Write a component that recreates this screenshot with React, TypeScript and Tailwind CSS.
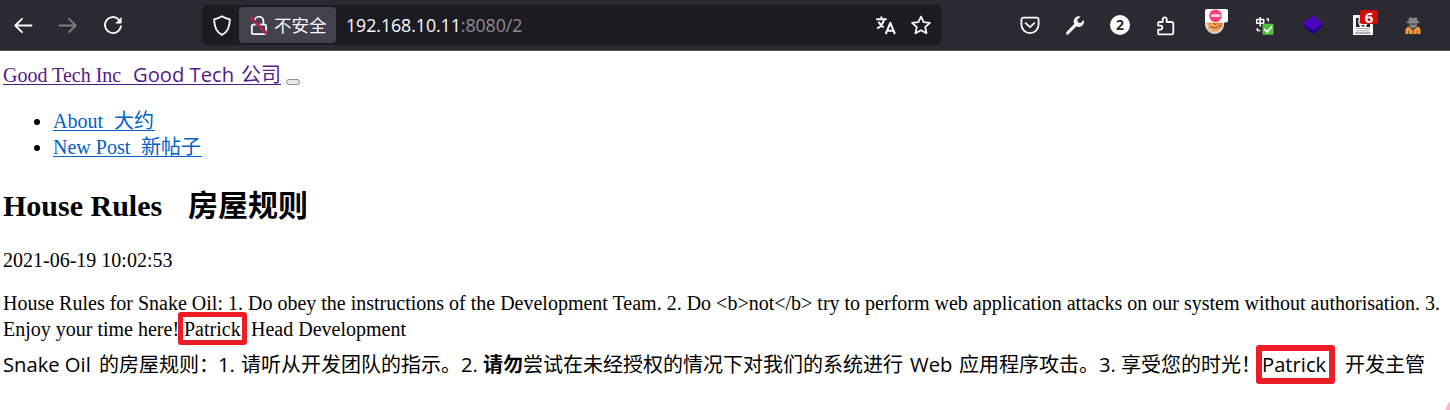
import React from 'react';

type IconProps = { children: React.ReactNode; className?: string };

/* 30px square icon; drawings use the same pixel grid, centred on 15,15 */
function Icon({ children, className = '' }: IconProps) {
  return (
    <svg
      viewBox="0 0 30 30"
      className={`h-[30px] w-[30px] shrink-0 ${className}`}
      fill="none"
      stroke="#fbfbfe"
      strokeWidth="1.8"
      strokeLinecap="round"
      strokeLinejoin="round"
    >
      {children}
    </svg>
  );
}

function Toolbar() {
  return (
    <header className="flex h-[51px] items-center border-b border-[#53525c] bg-[#2b2a33] pl-2">
      <nav className="flex w-[194px] gap-[15px]">
        <Icon>
          <path d="M23.5 15.5H7.2M14 8.8 7.2 15.5l6.8 6.7" />
        </Icon>
        <Icon className="opacity-40">
          <path d="M6.5 15.5h16.3M16 8.8l6.8 6.7-6.8 6.7" />
        </Icon>
        <Icon>
          <path d="M22.9 16.2A8 8 0 1 1 20.6 9.3" />
          <path d="M23.6 7.1v5.6a.7.7 0 0 1-.7.7h-5.6z" fill="#fbfbfe" stroke="none" />
        </Icon>
      </nav>

      <div className="flex h-[40px] w-[739px] items-center rounded-[5px] bg-[#1c1b22]">
        <Icon className="ml-[5px]">
          <path d="M15 6.3c2.5 1.7 5.2 2.6 7.9 3-.1 7.6-2.4 13-7.9 15.6-5.5-2.6-7.8-8-7.9-15.6 2.7-.4 5.4-1.3 7.9-3z" />
        </Icon>
        <div className="ml-[2px] flex h-[36px] w-[97px] items-center rounded-[4px] bg-[#42414d]">
          <Icon className="ml-[5px]">
            <path d="M9.8 14.6h11a1.3 1.3 0 0 1 1.3 1.3v6.5a1.8 1.8 0 0 1-1.8 1.8H9.6a1.8 1.8 0 0 1-1.8-1.8v-6a1.8 1.8 0 0 1 1.8-1.8zM10.8 14.3V11a4.3 4.3 0 0 1 8.6 0v3.3" />
            <path d="M7 7.8 23.3 24.2" stroke="#42414d" strokeWidth="3.2" />
            <path d="M7 7.8 23.3 24.2" stroke="#e8114f" strokeWidth="1.7" />
          </Icon>
          <span className="font-['Noto_Sans_CJK_SC',sans-serif] text-[17.5px] leading-[30px] whitespace-nowrap text-[#fbfbfe]">
            不安全
          </span>
        </div>
        <div className="ml-[10px] flex-1 font-['Open_Sans',sans-serif] text-[17.8px] leading-[30px] tracking-[-0.07px] whitespace-nowrap text-[#fbfbfe]">
          <span>192.168.10.11</span>
          <span className="text-[#8d8c96]">:8080/2</span>
        </div>
        <Icon>
          <path
            d="M5.200 9.200h10.500M10.400 6.500v2.700M13.100 9.400c-1 4-3.400 7.200-7 9M7.500 11.800c1.200 2.400 3 4.300 5.300 5.600M14.700 24l4.600-11.200L23.900 24M16.200 20.700h6.200"
            strokeWidth="2"
            strokeLinecap="butt"
          />
        </Icon>
        <Icon className="mr-[5px] ml-[5px]">
          <path d="m15 6.500 2.600 5.700 6.300.7-4.700 4.200 1.300 6.200L15 20.200l-5.500 3.100 1.300-6.200-4.700-4.200 6.300-.7z" />
        </Icon>
      </div>

      <div className="ml-[74px] flex items-center">
        <Icon>
          <path d="M8.400 7.700h13.200a2 2 0 0 1 2 2v4.800a8.600 8.600 0 0 1-17.200 0V9.700a2 2 0 0 1 2-2z" />
          <path d="m10.700 13.200 4.300 4 4.300-4" />
        </Icon>
        <Icon className="ml-[15px]">
          <path d="m7.600 23 8-8.200" strokeWidth="3.200" />
          <path
            d="M20.700 6.700a5.400 5.400 0 0 0-7 6.400l3.700 3.700a5.400 5.400 0 0 0 6.400-6.800l-3 3-3-.7-.6-2.900z"
            fill="#fbfbfe"
            stroke="none"
          />
        </Icon>
        <div className="ml-[20px] flex h-5 w-5 items-center justify-center rounded-full bg-[#fbfbfe] font-['Open_Sans',sans-serif] text-[14px] leading-none font-bold text-[#2b2a33]">
          2
        </div>
        <Icon className="ml-[20px]">
          <path d="M9 12h3.700V9.300a2 2 0 0 1 4 0V12h4.800a1.800 1.800 0 0 1 1.800 1.800v8.700a1.800 1.800 0 0 1-1.800 1.800H9a.8.8 0 0 1-.8-.8v-3.900h2.200a2 2 0 0 0 0-4H8.200v-2.800A.8.8 0 0 1 9 12z" />
        </Icon>
        <div className="ml-[25px] h-[32px] w-[24px]">
          <svg viewBox="0 0 24 32" className="h-[32px] w-[24px]">
            <path d="M-1 12 19 13c1 6-3 12-9.500 12S0 19-1 12z" fill="#d8d7d3" />
            <path d="M2 13.500h15.500V17c-2 5-10 6-13 3z" fill="#ed8733" />
            <path d="m3 16 4-2 4 2 6-1-3 4-6 2-5-1z" fill="#f6a75a" />
            <path d="m5 17.500 5 1.500 6-3M8 14l3 2" fill="none" stroke="#8a4a22" />
            <path d="M2.500 20c4 3 8 3 13-1-2 5-9 7-13 1z" fill="#e1b47a" />
            <rect x="0" y="0" width="23" height="13.5" rx="2" fill="#fff" />
            <circle cx="10.5" cy="6.7" r="6.300" fill="#f24476" />
            <rect x="6" y="5.200" width="9.500" height="2.800" rx="1" fill="#fbd3df" />
          </svg>
        </div>
        <Icon className="ml-[21px]">
          <path d="M6.700 9.500h7v3.700h-7zM10.200 7v9.500M16.500 9h1.800v2.500M7.300 18v2.500h3" strokeWidth="1.500" strokeLinecap="butt" />
          <rect x="12.500" y="13.800" width="11" height="11" rx="1" fill="#52c23f" stroke="none" />
          <path d="m14.800 19.500 2.500 2.500 4.300-5" strokeWidth="1.800" />
        </Icon>
        <Icon className="ml-[18px]">
          <path d="m5.500 16.500 9.500 7.700 9.500-7.700v-2h-19z" fill="#23058a" stroke="none" />
          <path d="m15 5.300 10 7.700-10 7.500L5 13z" fill="#4d06bd" stroke="none" />
        </Icon>
        <div className="relative ml-[25px] h-[30px] w-[25px]">
          <svg viewBox="0 0 25 30" className="h-[30px] w-[25px]">
            <path d="M0 5h20v20H0z" fill="#f7f7f7" />
            <path d="M3 8h3l-1 4 2 5H3zM17 8v9h-4l2-5-1-4z" fill="#262626" />
            <path d="M6.500 11h2.500v2H6.500zM11 11h2.500v2H11zM8.500 15h3v1.500h-3z" fill="#333" />
            <path d="M3 18.500h14M4 20.700h12" stroke="#999" strokeWidth=".8" />
            <path d="M2.500 23h15" stroke="#555" strokeDasharray="3 .5" />
          </svg>
          <span className="absolute top-0 left-[7px] flex h-[14px] w-[18px] items-center justify-center rounded-[2px] bg-[#d10a0a] font-['Open_Sans',sans-serif] text-[15px] leading-none font-bold text-white">
            6
          </span>
        </div>
        <Icon className="ml-[20px]">
          <path d="M11 7.500h2l2 .8 2-.8h2l.7 4h1.800v1.500h-13v-1.500h1.800zM10.700 13h8.600l-1 4-3.300 1.500-3.300-1.500z" fill="#85858a" stroke="none" />
          <path d="M11.500 13.500h7v1.200h-7z" fill="#4b4b52" stroke="none" />
          <path d="M10.500 16.500 15 20.500l4.500-4c2 .8 3 1.800 3 4V24h-15v-3.500c0-2.200 1-3.200 3-4z" fill="#f79b38" stroke="none" />
          <path d="M15 19v5M10.700 21v3M19.300 21v3" stroke="#6a4a31" strokeWidth="1" />
        </Icon>
      </div>
    </header>
  );
}

type LinkProps = { latin: string; latinWidth: string; children: React.ReactNode; className: string };

function PageLink({ latin, latinWidth, children, className }: LinkProps) {
  return (
    <a href="#" className={`flex h-[24px] items-baseline border-b leading-[26px] whitespace-nowrap ${className}`}>
      <span className={`shrink-0 ${latinWidth}`}>{latin}</span>
      {children}
    </a>
  );
}

const CJK = "font-['Noto_Sans_CJK_SC',sans-serif]";

/* Consecutive runs of the translated paragraph */
const runs = [
  { text: 'Snake Oil', box: 'w-[96px]', latin: true },
  { text: '的房屋规则：', box: 'w-[119px]', latin: false },
  { text: '1.', box: 'w-[23px]', latin: true },
  { text: '请听从开发团队的指示。', box: 'w-[220px]', latin: false },
  { text: '2.', box: 'w-[22px]', latin: true },
  { text: '请勿', box: 'w-[40px] font-bold', latin: false },
  { text: '尝试在未经授权的情况下对我们的系统进行', box: 'w-[387px]', latin: false },
  { text: 'Web', box: 'w-[49px]', latin: true },
  { text: '应用程序攻击。', box: 'w-[140px]', latin: false },
  { text: '3.', box: 'w-[22px]', latin: true },
  { text: '享受您的时光！', box: 'w-[141px]', latin: false },
  { text: 'Patrick', box: 'w-[83px]', latin: true },
  { text: '开发主管', box: 'w-[80px]', latin: false },
];

export default function App() {
  return (
    <div className="relative h-[410px] w-[1450px] overflow-hidden bg-white">
      <Toolbar />
      <main className="flex flex-col pt-[10px] pl-[3px] font-['Liberation_Serif','Noto_Sans_CJK_SC',serif] text-[20px] leading-[26px] text-black">
        <div className="flex h-[46px]">
          <PageLink latin="Good Tech Inc" latinWidth="w-[130px]" className="w-[278px] border-[#551a8b] text-[#551a8b]">
            <span className="w-[108px] font-['Open_Sans',sans-serif] text-[20.2px]">Good Tech</span>
            <span className={CJK}>公司</span>
          </PageLink>
          <button
            aria-label="Toggle navigation"
            className="mt-[18px] ml-[5px] h-[6px] w-[14px] rounded-[3px] border border-[#8f8f9d] bg-[#e9e9ed]"
          />
        </div>
        <ul className="flex h-[78px] list-outside list-disc flex-col pl-[50px]">
          {[
            { latin: 'About', cn: '大约', w: 'w-[61px]', box: 'w-[102px] border-[#0061c9] text-[#0061c9]' },
            { latin: 'New Post', cn: '新帖子', w: 'w-[88px]', box: 'w-[149px] border-[#0061c9] text-[#0061c9]' },
          ].map((item) => (
            <li key={item.latin} className="h-[26px]">
              <PageLink latin={item.latin} latinWidth={item.w} className={item.box}>
                <span className={CJK}>{item.cn}</span>
              </PageLink>
            </li>
          ))}
        </ul>
        <h1 className="flex h-[62px] items-baseline text-[30px] leading-[36px] font-bold whitespace-nowrap">
          <span className="w-[185px]">House Rules</span>
          <span className={CJK}>房屋规则</span>
        </h1>
        <p className="h-[43px]">2021-06-19 10:02:53</p>
        <div className="h-[61px] whitespace-nowrap">
          <p>
            House Rules for Snake Oil: 1. Do obey the instructions of the Development Team. 2. Do &lt;b&gt;not&lt;/b&gt; try
            to perform web application attacks on our system without authorisation. 3.
          </p>
          <p className="flex">
            <span className="w-[181px]">Enjoy your time here!</span>
            <span className="w-[67px]">Patrick</span>
            <span>Head Development</span>
          </p>
        </div>
        <p className="flex h-[26px] items-baseline whitespace-nowrap">
          {runs.map((run) => (
            <span
              key={run.text}
              className={`shrink-0 ${run.box} ${run.latin ? "font-['Open_Sans',sans-serif] text-[20.2px]" : CJK}`}
            >
              {run.text}
            </span>
          ))}
        </p>
      </main>

      {/* Highlight frames and floating bubble */}
      <div className="absolute top-[312px] left-[178px] h-[33px] w-[69px] rounded-[3px] border-[5px] border-[#ee1c25]" />
      <div className="absolute top-[345px] left-[1256px] h-[39px] w-[79px] rounded-[3px] border-[6px] border-[#ee1c25]" />
      <div className="absolute top-[393px] left-[1445px] h-[44px] w-[44px] rounded-full bg-[#fbb4d0]" />
    </div>
  );
}
